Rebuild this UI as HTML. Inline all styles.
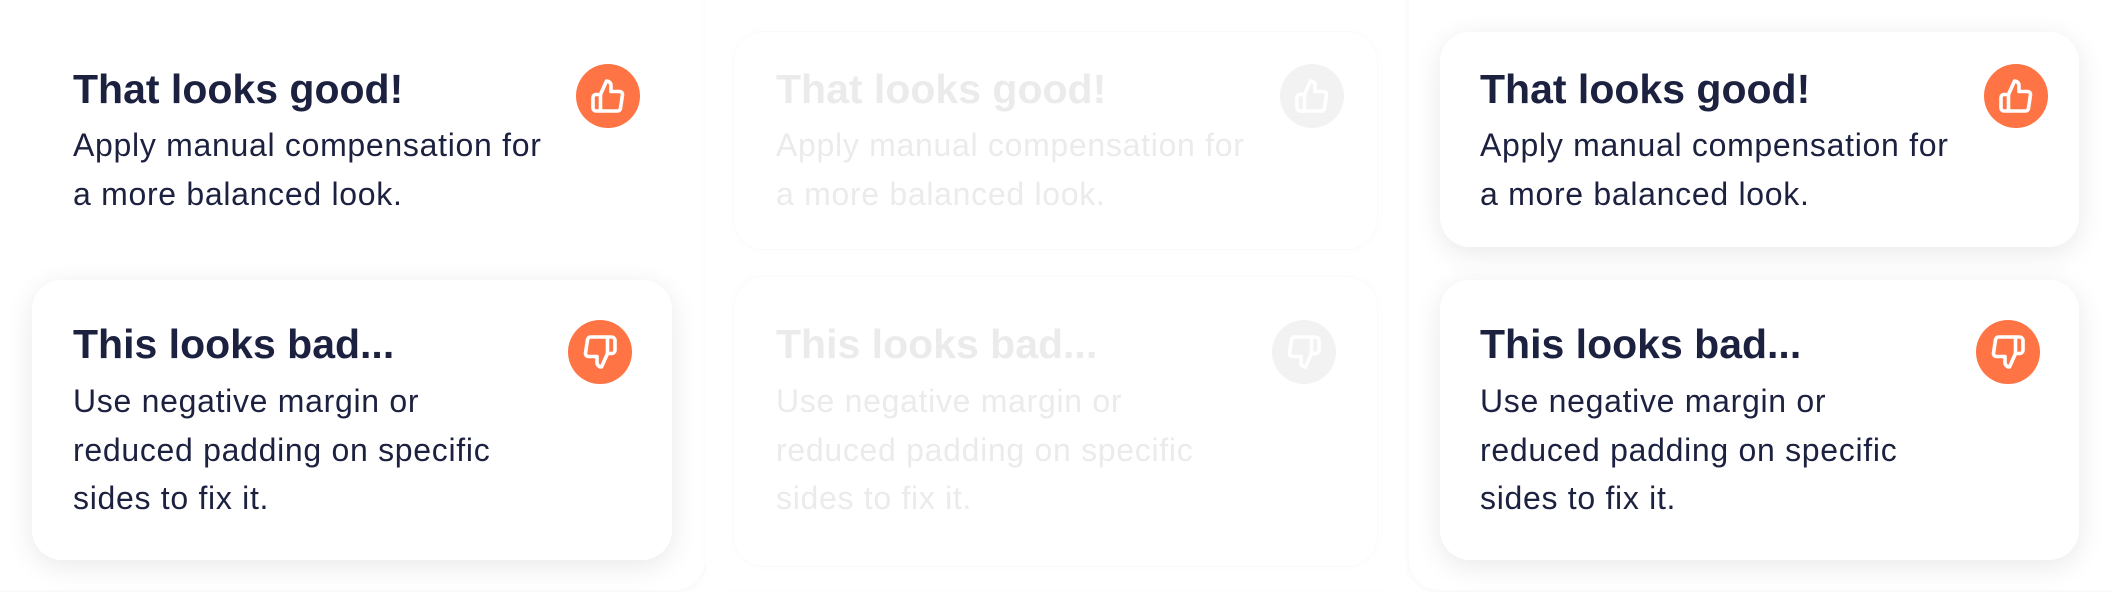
<!DOCTYPE html>
<html><head><meta charset="utf-8"><style>
*{margin:0;padding:0;box-sizing:border-box}
html,body{width:2112px;height:592px;overflow:hidden;background:#fff;position:relative;font-family:"Liberation Sans",sans-serif}
.panel{position:absolute;top:-40px;height:630px;border-radius:30px;background:#fff;box-shadow:0 2px 8px rgba(0,0,0,0.04)}
.card{position:absolute;background:#fff;border-radius:30px;box-shadow:0 6px 28px rgba(0,0,0,0.09)}
.t{position:absolute;font-weight:700;font-size:41px;line-height:48px;color:#1d2140;white-space:nowrap}
.b{position:absolute;font-size:32px;line-height:48.5px;letter-spacing:0.7px;color:#1d2140;white-space:nowrap}
.ic{position:absolute;width:64px;height:64px;border-radius:50%;background:#ff7445;display:flex;align-items:center;justify-content:center}
.fade .t,.fade .b{color:#ebebeb}
.fade .ic{background:#f2f2f2}
.fade .card{box-shadow:0 0 0 1px #fafafa,0 0 16px rgba(0,0,0,0.015)}
</style></head><body>
<div class="panel" style="left:-40px;width:745px"></div>
<div class="panel" style="left:705px;width:704px;box-shadow:0 0 6px rgba(0,0,0,0.025)"></div>
<div class="panel" style="left:1409px;width:760px"></div>

<div class="card" style="left:32px;top:280px;width:640px;height:280px"></div>
<div class="t" style="left:73px;top:65px">That looks good!</div>
<div class="b" style="left:73px;top:121px">Apply manual compensation for<br>a more balanced look.</div>
<div class="ic" style="left:576px;top:64px"><svg width="36" height="36" viewBox="0 0 24 24" fill="none" stroke="#fff" stroke-width="2.4" stroke-linecap="round" stroke-linejoin="round"><path d="M14 9V5a3 3 0 0 0-3-3l-4 9v11h11.28a2 2 0 0 0 2-1.7l1.38-9a2 2 0 0 0-2-2.3zM7 22H4a2 2 0 0 1-2-2v-7a2 2 0 0 1 2-2h3"/></svg></div>
<div class="t" style="left:73px;top:320px">This looks bad...</div>
<div class="b" style="left:73px;top:377px">Use negative margin or<br>reduced padding on specific<br>sides to fix it.</div>
<div class="ic" style="left:568px;top:320px"><svg width="36" height="36" viewBox="0 0 24 24" fill="none" stroke="#fff" stroke-width="2.4" stroke-linecap="round" stroke-linejoin="round"><path d="M10 15v4a3 3 0 0 0 3 3l4-9V2H5.72a2 2 0 0 0-2 1.7l-1.38 9a2 2 0 0 0 2 2.3zm7-13h2.67A2.31 2.31 0 0 1 22 4v7a2.31 2.31 0 0 1-2.33 2H17"/></svg></div>

<div class="fade">
<div class="card" style="left:734px;top:32px;width:643px;height:217px"></div>
<div class="card" style="left:734px;top:277px;width:643px;height:289px"></div>
<div class="t" style="left:776px;top:65px">That looks good!</div>
<div class="b" style="left:776px;top:121px">Apply manual compensation for<br>a more balanced look.</div>
<div class="ic" style="left:1280px;top:64px"><svg width="36" height="36" viewBox="0 0 24 24" fill="none" stroke="#fff" stroke-width="2.4" stroke-linecap="round" stroke-linejoin="round"><path d="M14 9V5a3 3 0 0 0-3-3l-4 9v11h11.28a2 2 0 0 0 2-1.7l1.38-9a2 2 0 0 0-2-2.3zM7 22H4a2 2 0 0 1-2-2v-7a2 2 0 0 1 2-2h3"/></svg></div>
<div class="t" style="left:776px;top:320px">This looks bad...</div>
<div class="b" style="left:776px;top:377px">Use negative margin or<br>reduced padding on specific<br>sides to fix it.</div>
<div class="ic" style="left:1272px;top:320px"><svg width="36" height="36" viewBox="0 0 24 24" fill="none" stroke="#fff" stroke-width="2.4" stroke-linecap="round" stroke-linejoin="round"><path d="M10 15v4a3 3 0 0 0 3 3l4-9V2H5.72a2 2 0 0 0-2 1.7l-1.38 9a2 2 0 0 0 2 2.3zm7-13h2.67A2.31 2.31 0 0 1 22 4v7a2.31 2.31 0 0 1-2.33 2H17"/></svg></div>
</div>

<div class="card" style="left:1440px;top:32px;width:639px;height:215px"></div>
<div class="card" style="left:1440px;top:280px;width:639px;height:280px"></div>
<div class="t" style="left:1480px;top:65px">That looks good!</div>
<div class="b" style="left:1480px;top:121px">Apply manual compensation for<br>a more balanced look.</div>
<div class="ic" style="left:1984px;top:64px"><svg width="36" height="36" viewBox="0 0 24 24" fill="none" stroke="#fff" stroke-width="2.4" stroke-linecap="round" stroke-linejoin="round"><path d="M14 9V5a3 3 0 0 0-3-3l-4 9v11h11.28a2 2 0 0 0 2-1.7l1.38-9a2 2 0 0 0-2-2.3zM7 22H4a2 2 0 0 1-2-2v-7a2 2 0 0 1 2-2h3"/></svg></div>
<div class="t" style="left:1480px;top:320px">This looks bad...</div>
<div class="b" style="left:1480px;top:377px">Use negative margin or<br>reduced padding on specific<br>sides to fix it.</div>
<div class="ic" style="left:1976px;top:320px"><svg width="36" height="36" viewBox="0 0 24 24" fill="none" stroke="#fff" stroke-width="2.4" stroke-linecap="round" stroke-linejoin="round"><path d="M10 15v4a3 3 0 0 0 3 3l4-9V2H5.72a2 2 0 0 0-2 1.7l-1.38 9a2 2 0 0 0 2 2.3zm7-13h2.67A2.31 2.31 0 0 1 22 4v7a2.31 2.31 0 0 1-2.33 2H17"/></svg></div>
</body></html>
